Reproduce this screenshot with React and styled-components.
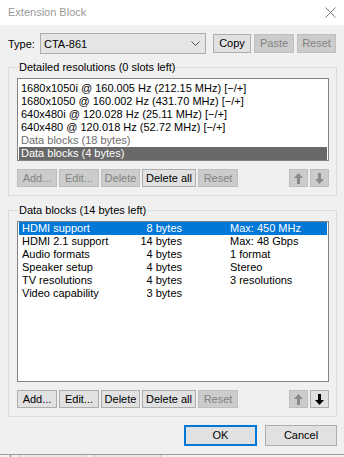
import React from 'react';
import styled, { createGlobalStyle } from 'styled-components';

const GlobalStyle = createGlobalStyle`
  * { box-sizing: border-box; }
  body {
    margin: 0;
    background: #f0f0f0;
    font-family: "Liberation Sans", Arial, sans-serif;
    font-size: 11px;
  }
`;

const Window = styled.div`
  width: 344px;
  height: 457px;
  display: flex;
  flex-direction: column;
  background: #f0f0f0;
  overflow: hidden;
`;

const TitleBar = styled.div`
  height: 25px;
  flex: none;
  background: #ffffff;
  display: flex;
  align-items: center;
  justify-content: space-between;
  padding: 0 8px 1px 8px;
  color: #999999;
`;

const Body = styled.div`
  flex: 1;
  padding: 8px 7px 0 8px;
  display: flex;
  flex-direction: column;
`;

const TypeRow = styled.div`
  display: flex;
  align-items: center;
  height: 21px;
`;

const Label = styled.span`
  width: 32px;
  color: #000;
`;

const Combo = styled.div`
  width: 166px;
  height: 21px;
  background: #e5e5e5;
  border: 1px solid #acacac;
  display: flex;
  align-items: center;
  justify-content: space-between;
  padding: 0 5px 0 3px;
  margin-right: 7px;
`;

const Btn = styled.button`
  font: inherit;
  width: ${p => p.w}px;
  height: ${p => p.h || 18}px;
  padding: 0;
  margin: 0;
  background: ${p => (p.disabled ? '#cccccc' : '#e1e1e1')};
  border: ${p => (p.primary ? '2px solid #0078d7' : p.disabled ? '1px solid #bfbfbf' : '1px solid #adadad')};
  color: ${p => (p.disabled ? '#838383' : '#000000')};
  display: flex;
  align-items: center;
  justify-content: center;
  line-height: 1;
`;

const TopButtons = styled.div`
  display: flex;
  gap: 3px;
`;

const Group = styled.fieldset`
  margin: ${p => p.top}px 0 0 0;
  border: 1px solid #dcdcdc;
  padding: 4px 7px 8px 8px;
  min-width: 0;
`;

const Legend = styled.legend`
  padding: 0 1px;
  margin-left: 1px;
  line-height: 14px;
  color: #000;
`;

const ListBox = styled.div`
  height: ${p => p.h}px;
  background: #ffffff;
  border: 1px solid #828282;
  padding: ${p => p.pad}px 1px 0 1px;
`;

const Row = styled.div`
  height: 13px;
  line-height: 13px;
  display: flex;
  padding-left: ${p => p.indent}px;
  white-space: nowrap;
  color: ${p => (p.sel ? '#ffffff' : p.dim ? '#6d6d6d' : '#000000')};
  background: ${p => p.sel || 'transparent'};
`;

const NameCell = styled.span`
  width: 100px;
`;

const SizeCell = styled.span`
  width: 60px;
  text-align: right;
`;

const ValueCell = styled.span`
  margin-left: 48px;
`;

const ButtonRow = styled.div`
  display: flex;
  gap: 2px;
  margin-top: 8px;
`;

const Spacer = styled.div`
  flex: 1;
`;

const Footer = styled.div`
  display: flex;
  justify-content: flex-end;
  gap: 8px;
  margin-top: 8px;
`;

const BottomEdge = styled.div`
  height: 3px;
  flex: none;
  margin-top: auto;
  border-top: 1px solid #9c9c9c;
  background:
    linear-gradient(to right, transparent 10px, #7a7a7a 10px, #7a7a7a 11px, transparent 11px,
      transparent 19px, #c8c8c8 19px, #c8c8c8 20px, #e6e6e6 20px, #e6e6e6 85px, #c8c8c8 85px,
      #c8c8c8 86px, transparent 86px, transparent 94px, #c8c8c8 94px, #c8c8c8 95px,
      #e6e6e6 95px, #e6e6e6 160px, #c8c8c8 160px, #c8c8c8 161px, transparent 161px);
`;

function Arrow({ down, color }) {
  return (
    <svg width="9" height="11" viewBox="0 0 9 11" style={{ transform: down ? 'rotate(180deg)' : 'none' }}>
      <polygon points="4.5,0 9,5 0,5" fill={color} />
      <rect x="3" y="5" width="3" height="6" fill={color} />
    </svg>
  );
}

const resolutions = [
  { text: '1680x1050i @ 160.005 Hz (212.15 MHz) [\u2212/+]' },
  { text: '1680x1050 @ 160.002 Hz (431.70 MHz) [\u2212/+]' },
  { text: '640x480i @ 120.028 Hz (25.11 MHz) [\u2212/+]' },
  { text: '640x480 @ 120.018 Hz (52.72 MHz) [\u2212/+]' },
  { text: 'Data blocks (18 bytes)', dim: true },
  { text: 'Data blocks (4 bytes)', sel: '#696969' },
];

const blocks = [
  ['HDMI support', '8 bytes', 'Max: 450 MHz'],
  ['HDMI 2.1 support', '14 bytes', 'Max: 48 Gbps'],
  ['Audio formats', '4 bytes', '1 format'],
  ['Speaker setup', '4 bytes', 'Stereo'],
  ['TV resolutions', '4 bytes', '3 resolutions'],
  ['Video capability', '3 bytes', ''],
];

export default function App() {
  return (
    <Window>
      <GlobalStyle />
      <TitleBar>
        <span>Extension Block</span>
        <svg width="11" height="11" viewBox="0 0 11 11">
          <path d="M0.5 0.5 L10.5 10.5 M10.5 0.5 L0.5 10.5" stroke="#7a7a7a" strokeWidth="1" />
        </svg>
      </TitleBar>
      <Body>
        <TypeRow>
          <Label>Type:</Label>
          <Combo>
            <span>CTA-861</span>
            <svg width="9" height="5" viewBox="0 0 9 5">
              <path d="M0.5 0.5 L4.5 4.5 L8.5 0.5" stroke="#555" fill="none" />
            </svg>
          </Combo>
          <TopButtons>
            <Btn w={38} h={19}>Copy</Btn>
            <Btn w={40} h={19} disabled>Paste</Btn>
            <Btn w={39} h={19} disabled>Reset</Btn>
          </TopButtons>
        </TypeRow>

        <Group top={6}>
          <Legend>Detailed resolutions (0 slots left)</Legend>
          <ListBox h={83} pad={3}>
            {resolutions.map(r => (
              <Row key={r.text} indent={2} dim={r.dim} sel={r.sel}>{r.text}</Row>
            ))}
          </ListBox>
          <ButtonRow>
            <Btn w={40} disabled>Add...</Btn>
            <Btn w={40} disabled>Edit...</Btn>
            <Btn w={39} disabled>Delete</Btn>
            <Btn w={54}>Delete all</Btn>
            <Btn w={40} disabled>Reset</Btn>
            <Spacer />
            <Btn w={19} disabled><Arrow color="#8a8a8a" /></Btn>
            <Btn w={19} disabled><Arrow down color="#8a8a8a" /></Btn>
          </ButtonRow>
        </Group>

        <Group top={7}>
          <Legend>Data blocks (14 bytes left)</Legend>
          <ListBox h={161} pad={0}>
            {blocks.map(([name, size, value], i) => (
              <Row key={name} indent={3} sel={i === 0 ? '#0078d7' : null}>
                <NameCell>{name}</NameCell>
                <SizeCell>{size}</SizeCell>
                <ValueCell>{value}</ValueCell>
              </Row>
            ))}
          </ListBox>
          <ButtonRow>
            <Btn w={40}>Add...</Btn>
            <Btn w={40}>Edit...</Btn>
            <Btn w={39}>Delete</Btn>
            <Btn w={54}>Delete all</Btn>
            <Btn w={40} disabled>Reset</Btn>
            <Spacer />
            <Btn w={19} disabled><Arrow color="#8a8a8a" /></Btn>
            <Btn w={19}><Arrow down color="#000" /></Btn>
          </ButtonRow>
        </Group>

        <Footer>
          <Btn w={73} h={21} primary>OK</Btn>
          <Btn w={72} h={21}>Cancel</Btn>
        </Footer>
      </Body>
      <BottomEdge />
    </Window>
  );
}
